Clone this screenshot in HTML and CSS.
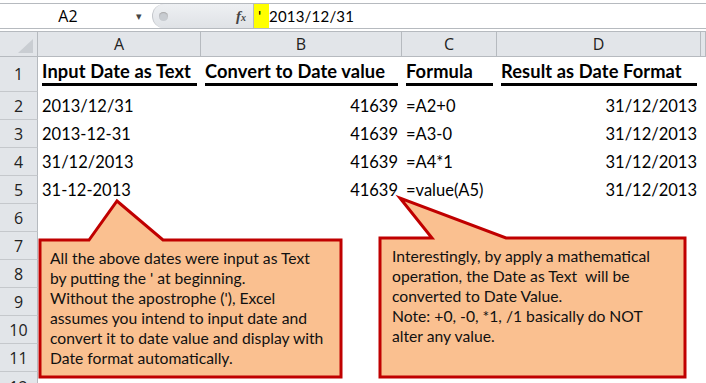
FILE: index.html
```html
<!DOCTYPE html>
<html lang="en">
<head>
  <meta charset="UTF-8">
  <title>Date as Text</title>
  <link rel="stylesheet" href="styles.css">
</head>
<body>

<div class="formula-bar">
  <div class="name-box">
    <span class="name">A2</span>
    <span class="drop">&#9662;</span>
  </div>
  <div class="fx-area">
    <span class="knob"></span>
    <span class="fx">f<sub>x</sub></span>
  </div>
  <div class="formula"><span class="mark">'</span>2013/12/31</div>
</div>

<div class="sheet">
  <div class="corner"><span class="tri"></span></div>
  <div class="col-head">A</div>
  <div class="col-head">B</div>
  <div class="col-head">C</div>
  <div class="col-head">D</div>
  <div class="col-head"></div>

  <div class="row-head tall">1</div>
  <div class="cell tall"><div class="title">Input Date as Text</div></div>
  <div class="cell tall"><div class="title">Convert to Date value</div></div>
  <div class="cell tall"><div class="title">Formula</div></div>
  <div class="cell tall"><div class="title">Result as Date Format</div></div>
  <div class="cell tall"></div>

  <div class="row-head">2</div>
  <div class="cell">2013/12/31</div>
  <div class="cell num">41639</div>
  <div class="cell">=A2+0</div>
  <div class="cell num">31/12/2013</div>
  <div class="cell"></div>

  <div class="row-head">3</div>
  <div class="cell">2013-12-31</div>
  <div class="cell num">41639</div>
  <div class="cell">=A3-0</div>
  <div class="cell num">31/12/2013</div>
  <div class="cell"></div>

  <div class="row-head">4</div>
  <div class="cell">31/12/2013</div>
  <div class="cell num">41639</div>
  <div class="cell">=A4*1</div>
  <div class="cell num">31/12/2013</div>
  <div class="cell"></div>

  <div class="row-head">5</div>
  <div class="cell">31-12-2013</div>
  <div class="cell num">41639</div>
  <div class="cell">=value(A5)</div>
  <div class="cell num">31/12/2013</div>
  <div class="cell"></div>

  <div class="row-head">6</div><div class="cell"></div><div class="cell"></div><div class="cell"></div><div class="cell"></div><div class="cell"></div>
  <div class="row-head">7</div><div class="cell"></div><div class="cell"></div><div class="cell"></div><div class="cell"></div><div class="cell"></div>
  <div class="row-head">8</div><div class="cell"></div><div class="cell"></div><div class="cell"></div><div class="cell"></div><div class="cell"></div>
  <div class="row-head">9</div><div class="cell"></div><div class="cell"></div><div class="cell"></div><div class="cell"></div><div class="cell"></div>
  <div class="row-head">10</div><div class="cell"></div><div class="cell"></div><div class="cell"></div><div class="cell"></div><div class="cell"></div>
  <div class="row-head">11</div><div class="cell"></div><div class="cell"></div><div class="cell"></div><div class="cell"></div><div class="cell"></div>
  <div class="row-head last">12</div><div class="cell"></div><div class="cell"></div><div class="cell"></div><div class="cell"></div><div class="cell"></div>
</div>

<!-- callout shapes drawn over the grid -->
<svg class="callouts" width="706" height="383" viewBox="0 0 706 383">
  <polygon points="40,240 89,240 117,201 163,240 341,240 341,377 40,377" />
  <polygon points="380,238 432,238 400,198 506,238 685,238 685,377 380,377" />
</svg>

<div class="note note-left">
  All the above dates were input as Text<br>
  by putting the ' at beginning.<br>
  Without the apostrophe ('), Excel<br>
  assumes you intend to input date and<br>
  convert it to date value and display with<br>
  Date format automatically.
</div>

<div class="note note-right">
  Interestingly, by apply a mathematical<br>
  operation, the Date as Text&nbsp; will be<br>
  converted to Date Value.<br>
  Note: +0, -0, *1, /1 basically do NOT<br>
  alter any value.
</div>

</body>
</html>
```

FILE: styles.css
```css
body { margin: 0; width: 706px; height: 383px; overflow: hidden; background: #fff; font-family: Lato, "Open Sans", sans-serif; color: #000; position: relative; }

.formula-bar { display: flex; height: 24px; margin-top: 3px; border-top: 1px solid #b6babf; border-bottom: 1px solid #b6babf; background: #fff; }
.name-box { width: 152px; display: flex; align-items: center; }
.name { width: 136px; text-align: center; font-size: 16px; font-family: "Open Sans", sans-serif; }
.drop { font-size: 11px; color: #444; }
.fx-area { width: 100px; display: flex; align-items: center; justify-content: space-between; background: linear-gradient(#eef0f3, #dfe2e6); border-left: 1px solid #c3c6cb; border-radius: 12px 0 0 12px; border-right: 1px solid #b6babf; }
.knob { width: 9px; height: 9px; border-radius: 50%; background: #c8ccd1; margin-left: 6px; box-shadow: inset 0 1px 1px #aaa; }
.fx { font-family: "Liberation Serif", serif; font-style: italic; font-weight: bold; font-size: 15px; color: #444; margin-right: 7px; }
.fx sub { font-size: 10px; vertical-align: baseline; }
.formula { flex: 1; display: flex; align-items: center; font-size: 15px; letter-spacing: 0.2px; }
.mark { background: #ffff00; display: inline-block; width: 11px; height: 24px; line-height: 24px; padding-left: 4px; letter-spacing: 0; font-size: 16px; }

.sheet { display: grid; grid-template-columns: 38px 163px 201px 95px 204px 5px; grid-template-rows: 26px 35px repeat(11, 28px); margin-top: 2px; }
.corner, .col-head { background: #e2e5e9; border-top: 1px solid #b6babf; border-bottom: 1px solid #b6babf; }
.corner { border-right: 1px solid #b6babf; position: relative; }
.tri { position: absolute; right: 4px; bottom: 3px; width: 0; height: 0; border-left: 15px solid transparent; border-bottom: 14px solid #c9cdd2; }
.col-head { border-right: 1px solid #b6babf; display: flex; align-items: center; justify-content: center; font-family: "Open Sans", sans-serif; font-size: 16px; color: #222; }
.row-head { background: #e2e5e9; border-right: 1px solid #b6babf; border-bottom: 1px solid #c5c8cc; display: flex; align-items: center; justify-content: center; font-family: "Open Sans", sans-serif; font-size: 16px; color: #222; }
.row-head.last { align-items: flex-start; padding-top: 4px; }
.cell { display: flex; align-items: center; padding: 0 4px; font-size: 16.5px; white-space: nowrap; }
.cell.num { justify-content: flex-end; }
.cell.tall { align-items: flex-start; }
.title { flex: 1; font-weight: bold; font-size: 18.3px; letter-spacing: 0.1px; padding-top: 3px; padding-bottom: 1px; border-bottom: 3px solid #000; }

.callouts { position: absolute; left: 0; top: 0; }
.callouts polygon { fill: #fac090; stroke: #c00000; stroke-width: 3; stroke-linejoin: miter; }

.note { position: absolute; font-size: 15.7px; line-height: 20px; color: #111; white-space: nowrap; }
.note-left { left: 50px; top: 248px; }
.note-right { left: 392px; top: 246px; }
```
